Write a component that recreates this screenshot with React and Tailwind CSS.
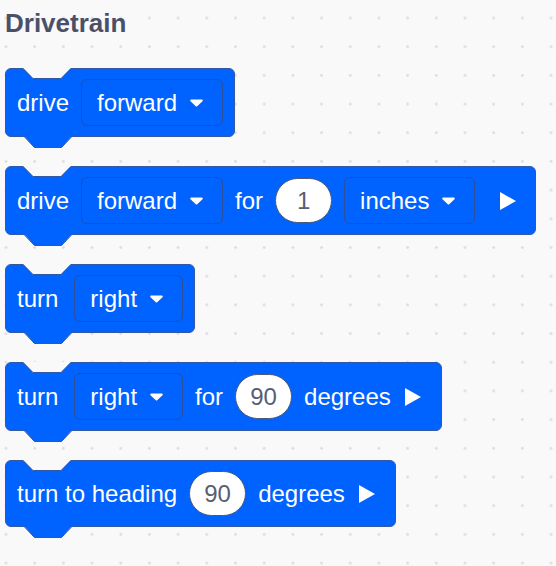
import React from 'react';

const BLUE = 'bg-[#0062ff]';

function Notch() {
  // top notch cut into the block edge
  return (
    <svg className="absolute left-[17px] top-[-1px]" width="48" height="12" viewBox="0 0 48 12">
      <polygon points="0,0 48,0 38,10.5 10,10.5" fill="#f9f9f9" />
      <polyline points="0,0.5 10,10.5 38,10.5 48,0.5" fill="none" stroke="#3358a6" strokeWidth="1" />
    </svg>
  );
}

function Tab() {
  // bottom tab under the block
  return (
    <svg className="absolute left-[18px] top-full" width="48" height="13" viewBox="0 0 48 13">
      <polygon points="0,0 48,0 37.5,11.5 10.5,11.5" fill="#0062ff" />
      <polyline points="0,0.5 10.5,11.5 37.5,11.5 48,0.5" fill="none" stroke="#3358a6" strokeWidth="1" />
    </svg>
  );
}

function Caret() {
  return (
    <svg width="13" height="8" viewBox="0 0 13 8">
      <path d="M1.2 0.5 H11.8 a1 1 0 0 1 0.7 1.7 L7.2 7.2 a1 1 0 0 1 -1.4 0 L0.5 2.2 A1 1 0 0 1 1.2 0.5 Z" fill="white" />
    </svg>
  );
}

function Dropdown({ label, className = '' }) {
  return (
    <div className={`flex h-[47px] items-center gap-[13px] rounded-md border border-[#2b4f9c] pl-[15px] pr-[19px] ${className}`}>
      <span>{label}</span>
      <Caret />
    </div>
  );
}

function Oval({ value }) {
  return (
    <div className="flex h-[45px] w-[57px] items-center justify-center rounded-full border border-[#4a5a7e] bg-white text-[#575e75]">
      {value}
    </div>
  );
}

function Play({ className = '' }) {
  return (
    <svg className={className} width="16" height="18" viewBox="0 0 16 18">
      <path d="M0 0 L16 9 L0 18 Z" fill="white" />
    </svg>
  );
}

function Block({ children }) {
  return (
    <div className={`relative flex items-center gap-3 rounded-md border border-[#3358a6] ${BLUE} py-[10px] pl-[11px] pr-[11px] text-white`}>
      <Notch />
      {children}
      <Tab />
    </div>
  );
}

export default function App() {
  return (
    <div className="h-[566px] w-[556px] overflow-hidden bg-[#f9f9f9] bg-[radial-gradient(circle,#dedede_1.1px,transparent_1.6px)] bg-[size:28.7px_28.7px] bg-[position:-8.35px_3.65px] font-['Liberation_Sans',Arial,sans-serif] text-[24px] leading-none">
      <h1 className="pl-[5px] pt-[8px] text-[26px] font-bold leading-[30px] text-[#4b5068]">Drivetrain</h1>

      <div className="mt-[30px] flex flex-col items-start gap-[29px] pl-[5px]">
        <Block>
          <span>drive</span>
          <Dropdown label="forward" />
        </Block>

        <Block>
          <span>drive</span>
          <Dropdown label="forward" />
          <span>for</span>
          <Oval value="1" />
          <Dropdown label="inches" />
          <Play className="ml-[13px] mr-[8px]" />
        </Block>

        <Block>
          <span>turn</span>
          <Dropdown label="right" className="ml-1" />
        </Block>

        <Block>
          <span>turn</span>
          <Dropdown label="right" className="ml-1" />
          <span>for</span>
          <Oval value="90" />
          <span>degrees</span>
          <Play className="ml-[2px] mr-[9px]" />
        </Block>

        <Block>
          <span>turn to heading</span>
          <Oval value="90" />
          <span>degrees</span>
          <Play className="ml-[2px] mr-[9px]" />
        </Block>
      </div>
    </div>
  );
}
